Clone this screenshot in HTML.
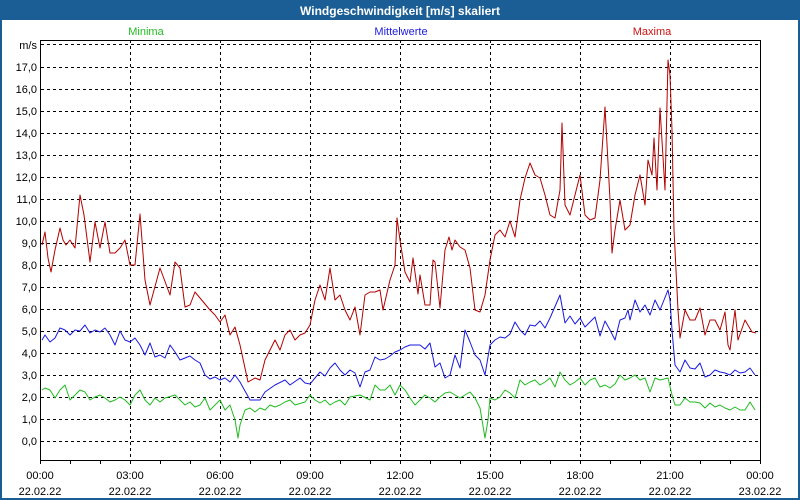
<!DOCTYPE html>
<html><head><meta charset="utf-8"><style>
html,body{margin:0;padding:0;background:#fff}
svg{display:block}
text{font-family:"Liberation Sans","DejaVu Sans",sans-serif}
</style></head><body>
<svg width="800" height="500" viewBox="0 0 800 500" xmlns="http://www.w3.org/2000/svg">
<rect x="0" y="0" width="800" height="500" fill="#1a5e95"/>
<rect x="2" y="20" width="796" height="478" fill="#fff"/>
<text x="400" y="15" fill="#fff" font-size="12" font-weight="bold" text-anchor="middle">Windgeschwindigkeit [m/s] skaliert</text>
<text x="146" y="35" fill="#22bb22" font-size="11" text-anchor="middle">Minima</text>
<text x="401" y="35" fill="#1a1ae0" font-size="11" text-anchor="middle">Mittelwerte</text>
<text x="652" y="35" fill="#cc1111" font-size="11" text-anchor="middle">Maxima</text>
<g stroke="#000" stroke-width="1" stroke-dasharray="3,3" fill="none" shape-rendering="crispEdges">
<line x1="41" y1="44.5" x2="760" y2="44.5"/>
<line x1="41" y1="67.5" x2="760" y2="67.5"/><line x1="41" y1="89.5" x2="760" y2="89.5"/><line x1="41" y1="111.5" x2="760" y2="111.5"/><line x1="41" y1="133.5" x2="760" y2="133.5"/><line x1="41" y1="155.5" x2="760" y2="155.5"/><line x1="41" y1="177.5" x2="760" y2="177.5"/><line x1="41" y1="199.5" x2="760" y2="199.5"/><line x1="41" y1="221.5" x2="760" y2="221.5"/><line x1="41" y1="243.5" x2="760" y2="243.5"/><line x1="41" y1="265.5" x2="760" y2="265.5"/><line x1="41" y1="287.5" x2="760" y2="287.5"/><line x1="41" y1="309.5" x2="760" y2="309.5"/><line x1="41" y1="331.5" x2="760" y2="331.5"/><line x1="41" y1="353.5" x2="760" y2="353.5"/><line x1="41" y1="375.5" x2="760" y2="375.5"/><line x1="41" y1="397.5" x2="760" y2="397.5"/><line x1="41" y1="419.5" x2="760" y2="419.5"/><line x1="41" y1="441.5" x2="760" y2="441.5"/>
<line x1="130.5" y1="40" x2="130.5" y2="460"/><line x1="220.5" y1="40" x2="220.5" y2="460"/><line x1="310.5" y1="40" x2="310.5" y2="460"/><line x1="400.5" y1="40" x2="400.5" y2="460"/><line x1="490.5" y1="40" x2="490.5" y2="460"/><line x1="580.5" y1="40" x2="580.5" y2="460"/><line x1="670.5" y1="40" x2="670.5" y2="460"/>
</g>
<g stroke="#000" stroke-width="1" fill="none" shape-rendering="crispEdges">
<polyline points="40.5,40 40.5,460.5 760.5,460.5 760.5,40.5 40.5,40.5"/>
<path d="M70.5,460v4M100.5,460v4M130.5,460v4M160.5,460v4M190.5,460v4M220.5,460v4M250.5,460v4M280.5,460v4M310.5,460v4M340.5,460v4M370.5,460v4M400.5,460v4M430.5,460v4M460.5,460v4M490.5,460v4M520.5,460v4M550.5,460v4M580.5,460v4M610.5,460v4M640.5,460v4M670.5,460v4M700.5,460v4M730.5,460v4M760.5,460v4M40.5,460v4"/>
</g>
<g font-size="11" fill="#000" text-anchor="end">
<text x="37" y="49">m/s</text>
<text x="37" y="71">17,0</text><text x="37" y="93">16,0</text><text x="37" y="115">15,0</text><text x="37" y="137">14,0</text><text x="37" y="159">13,0</text><text x="37" y="181">12,0</text><text x="37" y="203">11,0</text><text x="37" y="225">10,0</text><text x="37" y="247">9,0</text><text x="37" y="269">8,0</text><text x="37" y="291">7,0</text><text x="37" y="313">6,0</text><text x="37" y="335">5,0</text><text x="37" y="357">4,0</text><text x="37" y="379">3,0</text><text x="37" y="401">2,0</text><text x="37" y="423">1,0</text><text x="37" y="445">0,0</text>
</g>
<g font-size="11" fill="#000" text-anchor="middle">
<text x="40" y="479">00:00</text><text x="40" y="495">22.02.22</text>
<text x="130" y="479">03:00</text><text x="130" y="495">22.02.22</text>
<text x="220" y="479">06:00</text><text x="220" y="495">22.02.22</text>
<text x="310" y="479">09:00</text><text x="310" y="495">22.02.22</text>
<text x="400" y="479">12:00</text><text x="400" y="495">22.02.22</text>
<text x="490" y="479">15:00</text><text x="490" y="495">22.02.22</text>
<text x="580" y="479">18:00</text><text x="580" y="495">22.02.22</text>
<text x="670" y="479">21:00</text><text x="670" y="495">22.02.22</text>
<text x="760" y="479">00:00</text><text x="760" y="495">23.02.22</text>
</g>
<g fill="none" stroke-width="1" stroke-linejoin="round">
<polyline stroke="#22bb22" points="42,390 45,388 50,390 55,398 60,390 65,385 70,400 75,395 80,390 85,392 90,400 95,397 100,395 105,398 110,402 115,400 120,397 125,400 130,405 135,395 140,390 145,400 150,405 155,398 160,402 165,398 175,395 180,400 185,405 190,402 195,407 200,405 205,398 210,410 215,405 220,400 225,410 230,405 235,420 238,438 240,425 245,410 250,408 255,412 260,408 265,410 270,405 275,407 280,405 285,402 290,400 295,405 305,402 310,395 315,400 320,403 325,400 330,405 335,402 340,400 345,405 350,397 360,395 370,400 375,385 380,390 385,390 390,385 395,395 400,385 405,390 410,398 415,405 420,400 425,395 430,398 435,402 440,397 445,393 450,392 455,395 460,398 465,395 470,392 475,398 480,408 485,438 488,420 490,398 495,400 500,397 505,390 510,393 515,398 520,380 525,385 530,382 535,380 540,385 545,382 550,378 555,387 560,372 565,380 570,385 575,382 580,378 585,385 590,380 595,378 600,387 605,385 610,388 615,384 620,375 625,380 630,378 635,375 640,380 645,378 650,392 655,378 660,380 668,378 672,395 675,405 680,405 685,398 690,402 695,402 700,403 705,408 710,403 715,407 720,405 725,408 730,410 735,407 740,410 745,410 750,402 755,410"/>
<polyline stroke="#1a1ae0" points="42,340 45,335 50,342 55,338 60,328 65,330 70,335 75,330 80,331 85,325 90,333 95,330 100,332 105,328 110,335 115,345 120,331 125,340 130,342 135,338 140,345 145,355 150,343 155,357 160,355 165,358 170,345 175,352 180,360 190,356 195,360 200,363 205,375 210,379 215,377 220,380 225,378 230,382 235,375 240,382 250,400 260,400 265,392 275,385 285,380 290,385 300,378 305,383 310,384 315,378 320,372 325,376 330,368 335,363 340,370 345,375 350,370 355,373 360,387 365,372 370,370 375,357 380,360 385,359 390,356 395,352 400,350 405,347 410,345 415,345 420,345 425,349 430,343 435,367 440,363 445,378 450,375 455,355 460,368 465,330 470,342 475,355 480,360 485,375 490,345 495,340 500,337 505,338 510,334 515,322 520,330 525,335 530,325 535,326 540,321 545,328 550,318 560,295 565,323 570,316 575,324 580,318 585,327 590,322 595,317 600,336 605,321 610,330 615,340 620,320 625,318 628,310 630,320 635,300 640,312 645,305 650,315 655,300 660,310 668,290 670,300 672,330 675,365 680,372 685,360 690,368 695,369 700,363 705,377 710,375 715,370 720,372 725,373 730,375 735,370 740,373 745,372 750,368 755,375"/>
<polyline stroke="#b40000" points="42,245 45,232 48,258 51,272 55,250 60,228 63,240 66,245 70,240 75,248 80,195 84,215 90,262 95,222 100,248 105,222 110,253 115,253 120,248 125,240 130,265 135,265 140,214 145,280 150,305 160,268 170,295 175,262 180,268 185,307 190,305 195,292 210,310 215,315 220,322 225,315 230,335 235,327 240,345 248,382 255,378 260,380 265,360 270,350 275,340 280,350 285,335 290,330 295,340 300,335 305,333 310,325 315,300 320,285 325,300 330,268 335,300 340,295 345,310 350,320 355,307 360,335 365,295 370,292 375,292 380,290 383,310 390,280 395,265 397,218 400,240 405,272 410,282 413,258 418,294 420,275 425,305 430,305 433,260 435,262 440,308 445,250 449,237 452,250 455,240 460,247 465,250 470,268 475,310 480,312 485,295 490,260 495,235 500,230 505,237 510,221 515,237 520,200 525,178 530,163 535,175 540,178 545,195 550,215 555,218 560,190 562,123 565,205 570,215 575,195 580,175 585,215 590,220 595,218 600,180 605,107 610,200 612,253 615,230 620,200 625,230 630,225 635,195 640,175 645,205 648,160 652,175 654,138 657,190 660,108 665,190 668,60 670,75 672,130 674,230 678,310 680,338 685,310 690,320 695,320 700,308 705,335 710,320 715,320 720,330 725,312 728,345 730,350 735,310 738,340 745,320 752,332 756,333"/>
</g>
</svg>
</body></html>
